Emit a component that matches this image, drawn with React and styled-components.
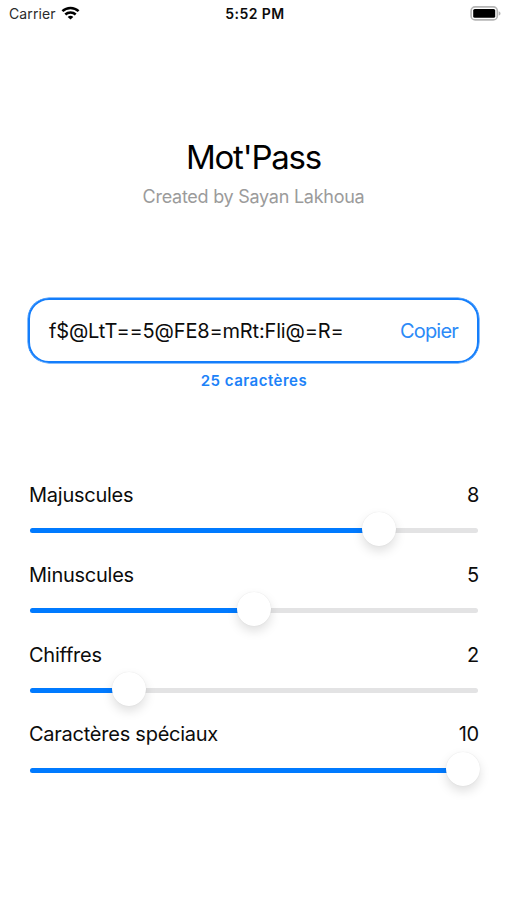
import React, { useState } from 'react';
import styled, { createGlobalStyle } from 'styled-components';

const GlobalStyle = createGlobalStyle`
    * {
        box-sizing: border-box;
    }

    body {
        margin: 0;
        background-color: #ffffff;
        color: #0c0c0c;
        font-family: Inter, "Liberation Sans", sans-serif;
    }
`;

const Screen = styled.div`
    width: 507px;
    height: 900px;
    display: flex;
    flex-direction: column;
    overflow: hidden;
`;

const StatusBar = styled.div`
    display: grid;
    grid-template-columns: 1fr auto 1fr;
    align-items: center;
    height: 26px;
    padding: 0 6px 0 9px;
`;

const Carrier = styled.div`
    display: flex;
    align-items: center;
    gap: 5px;
    font-size: 14px;
    letter-spacing: .1px;
    color: #2b2b2b;
`;

const Time = styled.div`
    font-size: 14px;
    font-weight: 600;
    letter-spacing: .45px;
`;

const Battery = styled.svg`
    justify-self: end;
`;

const Header = styled.header`
    display: flex;
    flex-direction: column;
    align-items: center;
    margin-top: 110px;
`;

const Title = styled.h1`
    margin: 0;
    font-size: 33px;
    font-weight: 400;
    line-height: 42px;
    letter-spacing: -1.2px;
    color: #000000;
`;

const Subtitle = styled.p`
    margin: 7px 0 0;
    font-size: 18px;
    line-height: 24px;
    letter-spacing: -.26px;
    color: #9b9b9b;
`;

const PasswordBox = styled.div`
    display: flex;
    justify-content: space-between;
    align-items: center;
    height: 65px;
    margin: 89px 28px 0;
    padding: 0 19px 0 19px;
    border: 2px solid #147efb;
    border-radius: 21px;
    box-shadow: 0 0 0 .5px #147efb;
    font-size: 20px;
`;

const Password = styled.span`
    letter-spacing: -.17px;
`;

const CopyButton = styled.button`
    padding: 0;
    border: none;
    background: none;
    font: inherit;
    letter-spacing: -.8px;
    color: #2b8af7;
    cursor: pointer;
`;

const Total = styled.div`
    margin: 8px 0 0 1px;
    text-align: center;
    font-size: 15px;
    font-weight: 600;
    line-height: 20px;
    letter-spacing: .5px;
    color: #1c82f8;
`;

const Settings = styled.div`
    display: flex;
    flex-direction: column;
    margin: 89px 28px 0 29px;
`;

const Setting = styled.div`
    height: 79.8px;
`;

const SettingHeader = styled.div`
    display: flex;
    justify-content: space-between;
    font-size: 20px;
    line-height: 30px;
    letter-spacing: -.25px;
`;

const Track = styled.div`
    position: relative;
    height: 5px;
    margin: 18.4px 1px 0;
    border-radius: 3px;
    background-color: #e3e3e4;
`;

const Fill = styled.div`
    height: 100%;
    border-radius: 3px;
    background-color: #007aff;
`;

const Thumb = styled.div`
    position: absolute;
    top: -16px;
    width: 34px;
    height: 34px;
    border-radius: 50%;
    background-color: #ffffff;
    box-shadow: 0 0 1px rgba(0, 0, 0, .12), 0 5px 11px rgba(0, 0, 0, .13);
`;

const settings = [
    { name: 'Majuscules', value: 8 },
    { name: 'Minuscules', value: 5 },
    { name: 'Chiffres', value: 2 },
    { name: 'Caractères spéciaux', value: 10 },
];

const WifiIcon = () => (
    <svg width="19" height="14" viewBox="0 0 18 14" fill="none" stroke="#000000" strokeWidth="2.5">
        <path d="M.9 5.1C5.4.8 12.6.8 17.1 5.1"/>
        <path d="M3.8 8.5c2.9-2.7 7.5-2.7 10.4 0"/>
        <path d="M9 13.6 6.2 10.9c1.6-1.4 4-1.4 5.6 0z" fill="#000000" stroke="none"/>
    </svg>
);

const BatteryIcon = () => (
    <Battery width="31" height="15" viewBox="0 0 31 15">
        <rect x="1.1" y=".9" width="26.2" height="13" rx="4" fill="#ffffff" stroke="#b5b5b5" strokeWidth="1.6"/>
        <rect x="3.2" y="3" width="22" height="8.8" rx="1.6" fill="#000000"/>
        <path d="M28.7 5.2c2.4 1 2.4 3.4 0 4.4z" fill="#b5b5b5"/>
    </Battery>
);

const Slider = ({ value, max = 10 }) => {
    const ratio = value / max;

    return (
        <Track>
            <Fill style={{ width: `${ratio * 96}%` }}/>
            <Thumb style={{ left: `${ratio * 417 - 1.5}px` }}/>
        </Track>
    );
};

const App = () => {
    const [password] = useState('f$@LtT==5@FE8=mRt:Fli@=R=');

    const copyPassword = () => {
        navigator.clipboard.writeText(password);
    };

    return (
        <>
            <GlobalStyle/>
            <Screen>
                <StatusBar>
                    <Carrier>
                        <span>Carrier</span>
                        <WifiIcon/>
                    </Carrier>
                    <Time>5:52 PM</Time>
                    <BatteryIcon/>
                </StatusBar>
                <Header>
                    <Title>Mot'Pass</Title>
                    <Subtitle>Created by Sayan Lakhoua</Subtitle>
                </Header>
                <PasswordBox>
                    <Password>{password}</Password>
                    <CopyButton onClick={copyPassword}>Copier</CopyButton>
                </PasswordBox>
                <Total>{password.length} caractères</Total>
                <Settings>
                    {settings.map(({ name, value }) => (
                        <Setting key={name}>
                            <SettingHeader>
                                <span>{name}</span>
                                <span>{value}</span>
                            </SettingHeader>
                            <Slider value={value}/>
                        </Setting>
                    ))}
                </Settings>
            </Screen>
        </>
    );
};

export default App;
